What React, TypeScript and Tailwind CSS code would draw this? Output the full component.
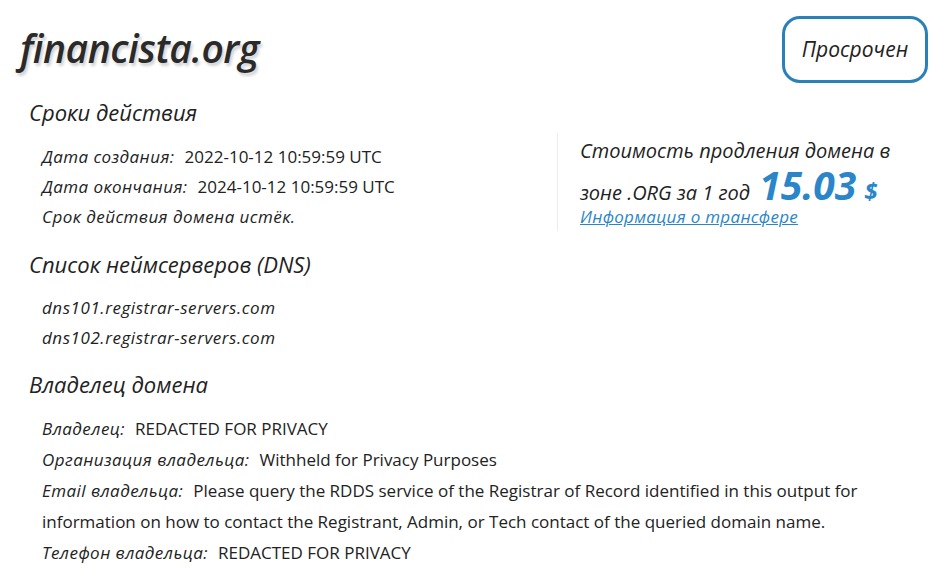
const Row = ({ label, value, lh = 'leading-[30px]' }: { label: string; value?: string; lh?: string }) => (
  <p className={lh}>
    <span className="italic tracking-[0.45px]">{label}</span>
    {value && <span className="ml-2.5">{value}</span>}
  </p>
)

const Heading = ({ children }: { children: React.ReactNode }) => (
  <h2 className="pl-[29px] text-[22px] italic leading-[30px] text-[#222]">{children}</h2>
)

export default function App() {
  return (
    <div className="w-[949px] h-[569px] overflow-hidden bg-white font-['Open_Sans',sans-serif] text-[17px] text-[#222]">
      {/* Header */}
      <div className="flex items-start justify-between pl-[20px] pr-[21px] pt-[16px]">
        <h1 className="mt-[7px] text-[39px] font-semibold italic leading-[50px] tracking-[-0.5px] text-[#2a2a2a] [text-shadow:2px_3px_3px_rgba(0,0,0,0.18)]">
          financista.org
        </h1>
        <div className="flex h-[67px] w-[146px] items-center justify-center rounded-[18px] border-[3px] border-[#2a80b9] text-[21px] italic">
          Просрочен
        </div>
      </div>

      {/* Dates + price */}
      <div className="flex">
        <div className="w-[557px] shrink-0 pt-[14px]">
          <Heading>Сроки действия</Heading>
          <div className="mt-[15px] pl-[42px]">
            <Row label="Дата создания:" value="2022-10-12 10:59:59 UTC" />
            <Row label="Дата окончания:" value="2024-10-12 10:59:59 UTC" />
            <Row label="Срок действия домена истёк." />
          </div>
        </div>
        <div className="mt-[50px] h-[98px] border-l border-[#ececec] pl-[22px] italic">
          <p className="text-[20px] leading-[35px]">Стоимость продления домена в</p>
          <p className="text-[20px] leading-[34px]">
            зоне .ORG за 1 год{' '}
            <span className="ml-1 text-[39px] font-bold leading-[34px] text-[#2a86c8]">15.03</span>
            <span className="ml-2 text-[24px] font-bold text-[#2a86c8]">$</span>
          </p>
          <a href="#" className="-mt-[5px] block text-[17px] leading-[24px] tracking-[0.3px] text-[#2a86c8] underline">
            Информация о трансфере
          </a>
        </div>
      </div>

      {/* DNS */}
      <div className="mt-[17px]">
        <Heading>Список неймсерверов (DNS)</Heading>
        <div className="mt-[14px] pl-[42px] italic tracking-[0.55px]">
          <p className="leading-[30px]">dns101.registrar-servers.com</p>
          <p className="leading-[30px]">dns102.registrar-servers.com</p>
        </div>
      </div>

      {/* Owner */}
      <div className="mt-[16px]">
        <Heading>Владелец домена</Heading>
        <div className="mt-[14px] pl-[42px] pr-[70px]">
          <Row lh="leading-[31px]" label="Владелец:" value="REDACTED FOR PRIVACY" />
          <Row lh="leading-[31px]" label="Организация владельца:" value="Withheld for Privacy Purposes" />
          <Row
            lh="leading-[31px]"
            label="Email владельца:"
            value="Please query the RDDS service of the Registrar of Record identified in this output for information on how to contact the Registrant, Admin, or Tech contact of the queried domain name."
          />
          <Row lh="leading-[31px]" label="Телефон владельца:" value="REDACTED FOR PRIVACY" />
        </div>
      </div>
    </div>
  )
}
